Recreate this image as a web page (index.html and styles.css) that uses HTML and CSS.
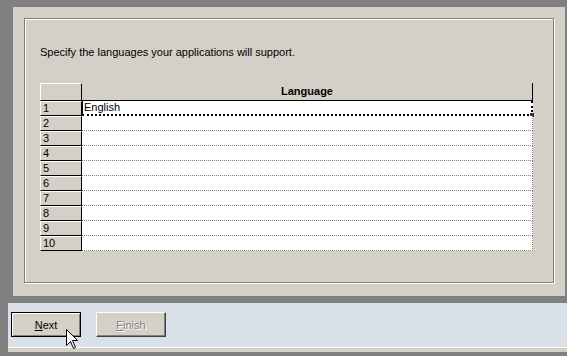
FILE: index.html
```html
<!DOCTYPE html>
<html lang="en">
<head>
    <meta charset="UTF-8">
    <title>Languages</title>
    <link rel="stylesheet" href="styles.css">
</head>
<body>
    <div class="panel">
        <div class="group">
            <p class="intro">Specify the languages your applications will support.</p>
            <div class="grid">
                <div class="row head">
                    <div class="num"></div>
                    <div class="cell">Language</div>
                </div>
                <div class="row active">
                    <div class="num">1</div>
                    <div class="cell">English<span class="handle"></span></div>
                </div>
                <div class="row"><div class="num">2</div><div class="cell"></div></div>
                <div class="row"><div class="num">3</div><div class="cell"></div></div>
                <div class="row"><div class="num">4</div><div class="cell"></div></div>
                <div class="row"><div class="num">5</div><div class="cell"></div></div>
                <div class="row"><div class="num">6</div><div class="cell"></div></div>
                <div class="row"><div class="num">7</div><div class="cell"></div></div>
                <div class="row"><div class="num">8</div><div class="cell"></div></div>
                <div class="row"><div class="num">9</div><div class="cell"></div></div>
                <div class="row"><div class="num">10</div><div class="cell"></div></div>
            </div>
        </div>
    </div>
    <div class="bar">
        <button class="btn default"><u>N</u>ext</button>
        <button class="btn" disabled><u>F</u>inish</button>
        <svg class="cursor" width="13" height="21" viewBox="0 0 13 21">
            <path d="M0.5 0.5 L0.5 16.5 L4.5 12.5 L7.5 19.5 L9.5 18.5 L6.5 11.5 L11.5 11.5 Z" fill="#fff" stroke="#000" stroke-width="1"/>
        </svg>
    </div>
    <div class="bar-edge"></div>
</body>
</html>
```

FILE: styles.css
```css
body {
    margin: 0;
    width: 567px;
    height: 356px;
    overflow: hidden;
    background: #808080;
    font-family: "Liberation Sans", Arial, sans-serif;
    font-size: 11px;
    color: #000;
}
.panel {
    margin: 7px 2px 0 13px;
    height: 289px;
    box-sizing: border-box;
    padding: 11px 0 0 11px;
    background: #d4d0c8;
}
.group {
    width: 530px;
    height: 265px;
    box-sizing: border-box;
    border: 1px solid #808080;
    box-shadow: inset 1px 1px #fff, 1px 1px #fff;
    padding: 27px 0 0 15px;
}
.intro {
    margin: 0;
    line-height: 13px;
}
.grid {
    margin-top: 24px;
    width: 493px;
}
.row {
    display: flex;
    height: 15px;
}
.num {
    width: 42px;
    box-sizing: border-box;
    border-top: 1px solid #fff;
    border-left: 1px solid #fff;
    border-bottom: 1px solid #000;
    border-right: 1px solid #000;
    background: #d4d0c8;
    padding-left: 2px;
    line-height: 13px;
}
.cell {
    position: relative;
    width: 451px;
    box-sizing: border-box;
    background: #fff;
    border-right: 1px dotted #808080;
    border-bottom: 1px dotted #808080;
}
.head {
    height: 18px;
}
.head .num {
    border-bottom: 1px solid #000;
}
.head .cell {
    background: #d4d0c8;
    border-right: 1px solid #000;
    border-bottom: 1px solid #000;
    text-align: center;
    font-weight: bold;
    line-height: 17px;
}
.active .cell {
    border-left: 1px solid #000;
    border-right: 2px dotted #000;
    border-bottom: 2px dotted #000;
    padding-left: 1px;
    line-height: 13px;
}
.handle {
    position: absolute;
    right: -3px;
    bottom: -3px;
    width: 4px;
    height: 4px;
    background: #333;
}
.bar {
    position: relative;
    display: flex;
    gap: 15px;
    margin: 7px 0 0 8px;
    height: 45px;
    box-sizing: border-box;
    padding: 9px 0 0 3px;
    background: #d9e0e7;
    border-bottom: 1px solid #fff;
}
.bar-edge {
    margin-left: 8px;
    height: 4px;
    background: #d4d0c8;
}
.btn {
    width: 70px;
    height: 25px;
    padding: 0;
    background: #d4d0c8;
    font-family: "Liberation Sans", Arial, sans-serif;
    font-size: 11px;
    color: #000;
    border: 1px solid;
    border-color: #fff #404040 #404040 #fff;
    box-shadow: inset -1px -1px #808080;
}
.btn.default {
    border: 1px solid #000;
    box-shadow: inset 1px 1px #fff, inset -1px -1px #808080;
}
.btn:disabled {
    color: #808080;
    text-shadow: 1px 1px #fff;
}
.cursor {
    position: absolute;
    left: 58px;
    top: 26px;
}
```
